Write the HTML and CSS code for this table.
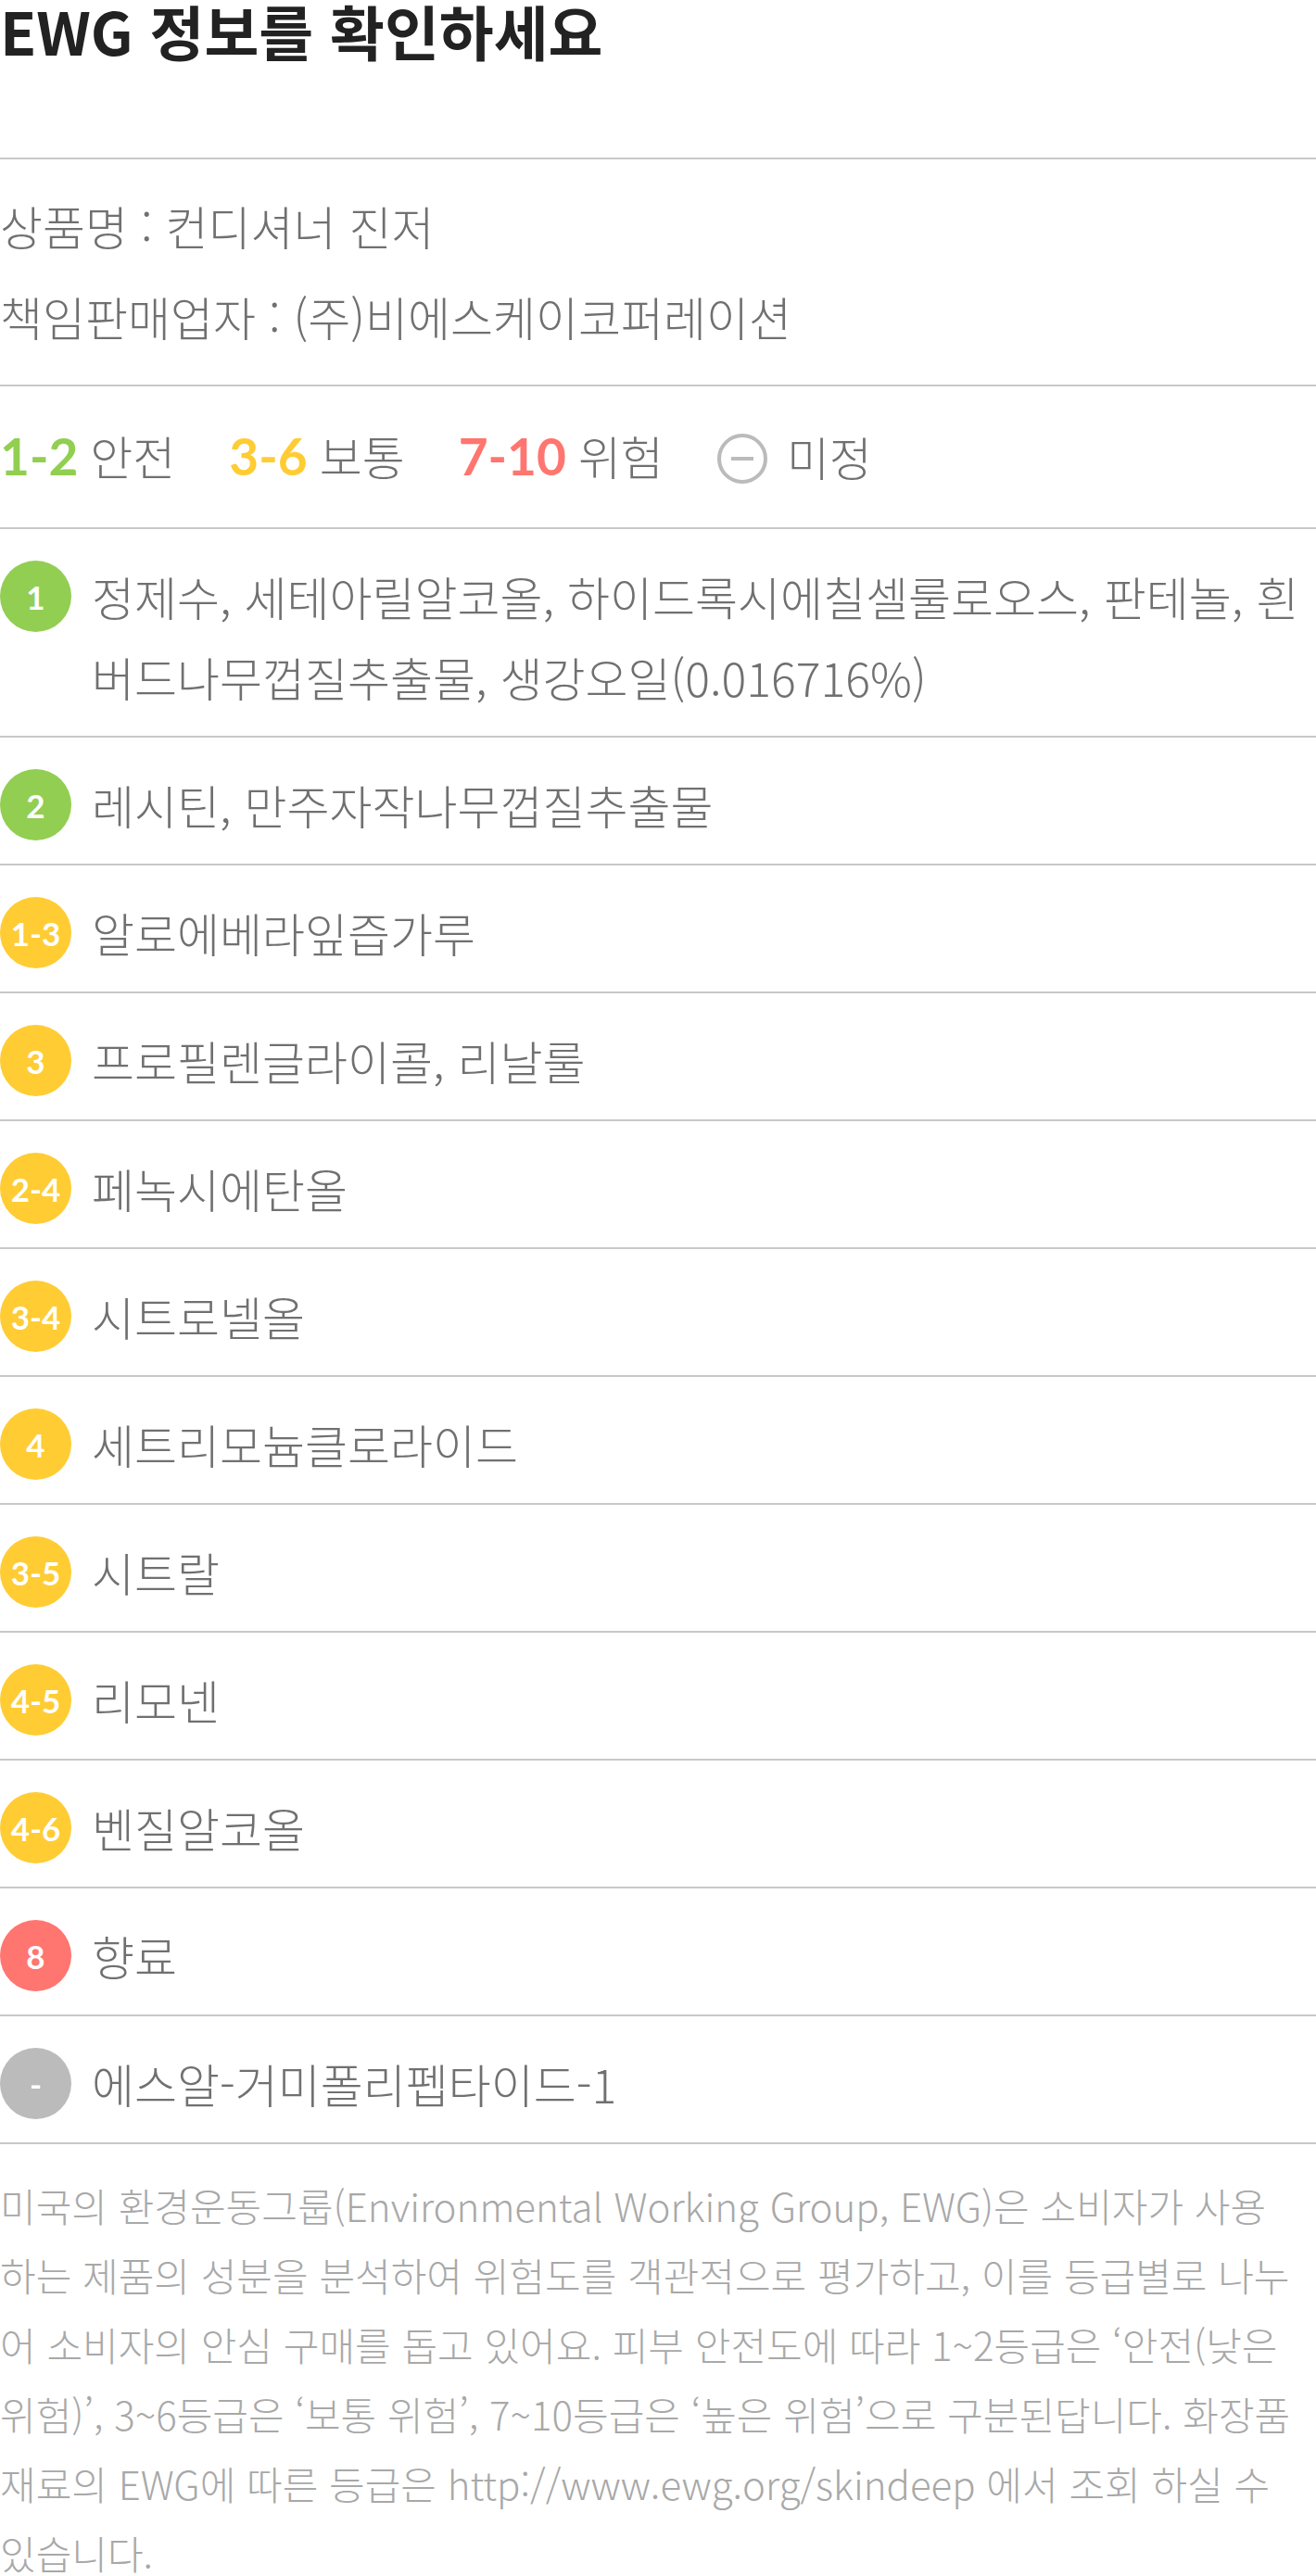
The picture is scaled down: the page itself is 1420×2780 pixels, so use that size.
FILE: index.html
```html
<!DOCTYPE html>
<html lang="ko">
<head>
  <meta charset="UTF-8" />
  <meta name="viewport" content="width=device-width, initial-scale=1.0"/>
  <title>EWG 정보</title>
  <link rel="stylesheet" href="styles.css">
</head>
<body>
  <div id="ewg">
    <h1 class="ewg-title">EWG 정보를 확인하세요</h1>

    <div class="product-info">
      <p>상품명 : 컨디셔너 진저</p>
      <p>책임판매업자 : (주)비에스케이코퍼레이션</p>
    </div>

    <div class="legend">
      <div class="legend-item"><span class="legend-num safe">1-2</span>안전</div>
      <div class="legend-item"><span class="legend-num normal">3-6</span>보통</div>
      <div class="legend-item"><span class="legend-num danger">7-10</span>위험</div>
      <div class="legend-item"><span class="legend-none"></span>미정</div>
    </div>

    <ul class="ingredients">
      <li><span class="grade safe">1</span><span class="name">정제수, 세테아릴알코올, 하이드록시에칠셀룰로오스, 판테놀, 흰버드나무껍질추출물, 생강오일(0.016716%)</span></li>
      <li><span class="grade safe">2</span><span class="name">레시틴, 만주자작나무껍질추출물</span></li>
      <li><span class="grade normal">1-3</span><span class="name">알로에베라잎즙가루</span></li>
      <li><span class="grade normal">3</span><span class="name">프로필렌글라이콜, 리날룰</span></li>
      <li><span class="grade normal">2-4</span><span class="name">페녹시에탄올</span></li>
      <li><span class="grade normal">3-4</span><span class="name">시트로넬올</span></li>
      <li><span class="grade normal">4</span><span class="name">세트리모늄클로라이드</span></li>
      <li><span class="grade normal">3-5</span><span class="name">시트랄</span></li>
      <li><span class="grade normal">4-5</span><span class="name">리모넨</span></li>
      <li><span class="grade normal">4-6</span><span class="name">벤질알코올</span></li>
      <li><span class="grade danger">8</span><span class="name">향료</span></li>
      <li><span class="grade none">-</span><span class="name">에스알-거미폴리펩타이드-1</span></li>
    </ul>

    <p class="ewg-note">미국의 환경운동그룹(Environmental Working Group, EWG)은 소비자가 사용<br>하는 제품의 성분을 분석하여 위험도를 객관적으로 평가하고, 이를 등급별로 나누<br>어 소비자의 안심 구매를 돕고 있어요. 피부 안전도에 따라 1~2등급은 ‘안전(낮은<br>위험)’, 3~6등급은 ‘보통 위험’, 7~10등급은 ‘높은 위험’으로 구분된답니다. 화장품<br>재료의 EWG에 따른 등급은 http://www.ewg.org/skindeep 에서 조회 하실 수<br>있습니다.</p>
  </div>
</body>
</html>
```

FILE: styles.css
```css
body {
  font-family: "Noto Sans CJK KR", "Noto Sans", sans-serif;
  margin: 0;
  padding: 0;
  background: #fff;
  color: #707070;
}
#ewg {
  width: 1420px;
}
.ewg-title {
  margin: 0;
  font-size: 64px;
  line-height: 64px;
  font-weight: 700;
  color: #222;
  padding-bottom: 106px;
  border-bottom: 2px solid #c8c8c8;
}
.product-info {
  padding: 22px 0 25px;
  border-bottom: 2px solid #c8c8c8;
}
.product-info p {
  margin: 0;
  font-size: 50px;
  line-height: 98px;
  font-weight: 300;
}
.legend {
  display: flex;
  align-items: center;
  gap: 58px;
  padding: 44px 0 47px;
  border-bottom: 2px solid #c8c8c8;
  font-size: 50px;
  line-height: 60px;
  font-weight: 300;
}
.legend-item {
  display: flex;
  align-items: baseline;
  gap: 13px;
}
.legend-num {
  font-family: Lato, "Noto Sans", sans-serif;
  font-weight: 700;
  font-size: 55px;
}
.legend-none {
  align-self: center;
  margin-top: 6px;
  margin-right: 8px;
  width: 46px;
  height: 46px;
  border: 4px solid #bbb;
  border-radius: 50%;
  display: flex;
  align-items: center;
  justify-content: center;
}
.legend-none::after {
  content: "";
  width: 24px;
  height: 4px;
  background: #bbb;
}
.safe { color: #92ce52; }
.normal { color: #ffcc33; }
.danger { color: #ff7570; }

.ingredients {
  list-style: none;
  margin: 0;
  padding: 0;
}
.ingredients li {
  display: flex;
  align-items: flex-start;
  gap: 22px;
  padding: 29px 0 20px;
  border-bottom: 2px solid #c8c8c8;
}
.grade {
  flex: none;
  width: 77px;
  height: 77px;
  margin-top: 5px;
  border-radius: 50%;
  display: flex;
  align-items: center;
  justify-content: center;
  font-family: Lato, "Noto Sans", sans-serif;
  font-weight: 700;
  font-size: 35px;
  color: #fff;
}
.grade.safe { background: #92ce52; color: #fff; }
.grade.normal { background: #ffcc33; color: #fff; }
.grade.danger { background: #ff7570; color: #fff; }
.grade.none { background: #bbb; color: #fff; }
.name {
  font-size: 50px;
  line-height: 87px;
  font-weight: 300;
}
.ewg-note {
  margin: 0;
  padding-top: 28px;
  font-size: 42px;
  line-height: 75px;
  font-weight: 300;
  color: #a8a8a8;
  white-space: nowrap;
}
```
